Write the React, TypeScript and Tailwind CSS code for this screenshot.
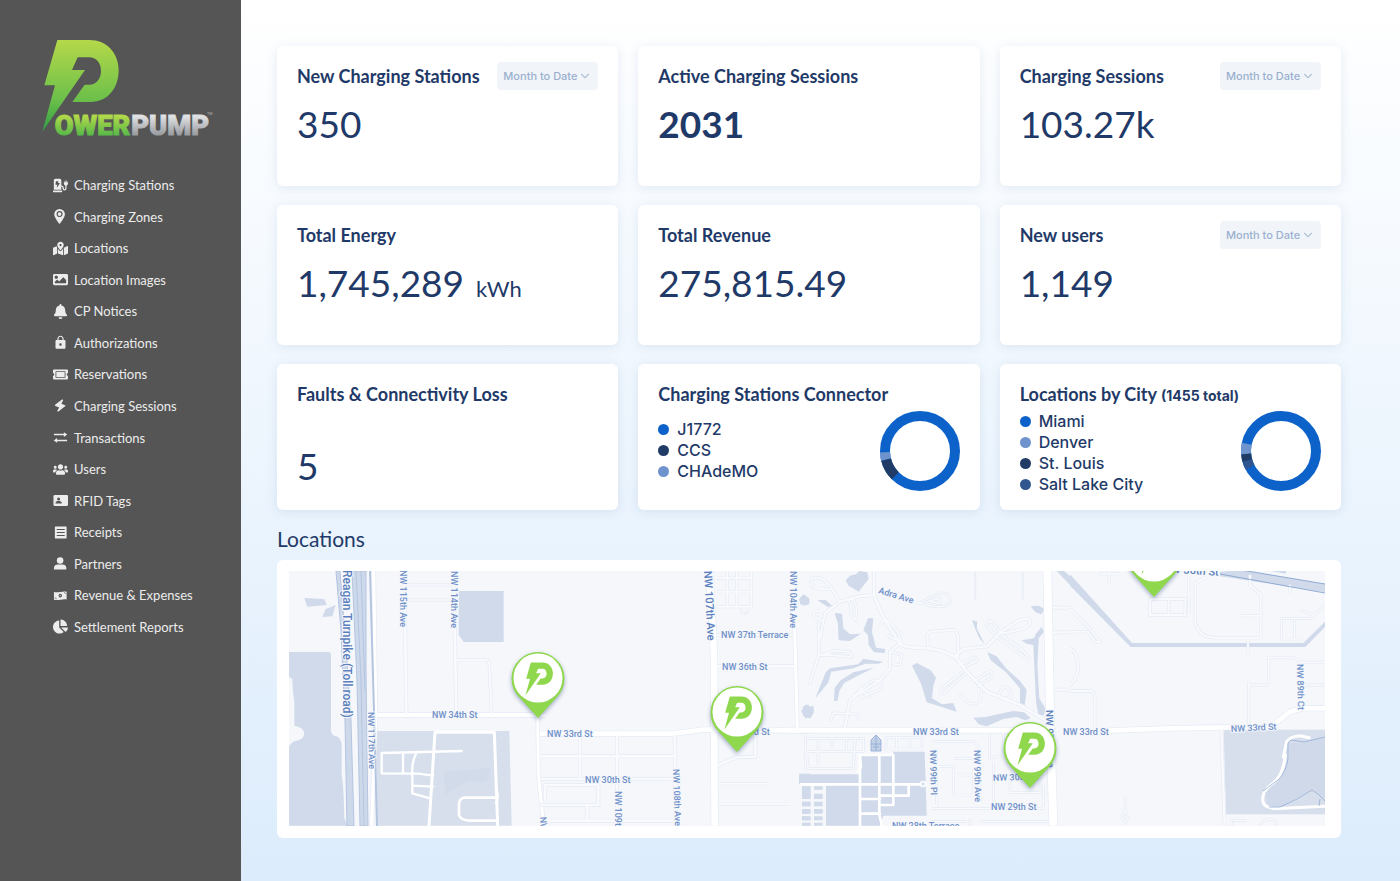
import React from "react";
import { ChevronDown } from "lucide-react";
import {
  FaBell,
  FaChargingStation,
  FaChartPie,
  FaImage,
  FaMapMarkedAlt,
  FaTicketAlt,
  FaUsers,
} from "react-icons/fa";
import { MdLock } from "react-icons/md";

const LOGO_PATH =
  "M82 45H178C231 45 266 85 266 136C266 190 233 231 182 231H127L164 179H178C200 179 213 160 213 138C213 113 199 97 177 97H143L126 135H165L37 320L75 181H43Z";

type IconProps = { className?: string };

const ZoneIcon = ({ className }: IconProps) => (
  <svg viewBox="0 0 16 16" className={className} fill="currentColor">
    <path d="M7 0a5.7 5.7 0 0 0-5.7 5.7C1.3 9.4 7 16 7 16s5.7-6.6 5.7-10.3A5.7 5.7 0 0 0 7 0Z" />
    <circle cx="7" cy="5.4" r="2.6" fill="none" stroke="#555" strokeWidth="1.2" />
  </svg>
);

const BoltIcon = ({ className }: IconProps) => (
  <svg viewBox="0 0 16 16" className={className} fill="currentColor">
    <path d="M9.6 1.6 2.2 7.2Q1.6 7.9 2.5 8.4L6.6 10 4.6 13.6Q4.6 14.8 5.8 14.4L13 8.9Q13.6 8.1 12.8 7.6L8.9 6.1 10.8 2.5Q10.8 1.2 9.6 1.6Z" />
  </svg>
);

const TransferIcon = ({ className }: IconProps) => (
  <svg viewBox="0 0 16 16" className={className} fill="currentColor">
    <path d="M1 4.1h10.6V2.4l3.6 2.5-3.6 2.5V5.7H1ZM15 10.3H4.4V8.6L.8 11.1l3.6 2.5v-1.7H15Z" />
  </svg>
);

const TagIcon = ({ className }: IconProps) => (
  <svg viewBox="0 0 16 16" className={className}>
    <rect x="0.5" y="2.2" width="15.5" height="11.6" rx="1.2" fill="currentColor" />
    <circle cx="6" cy="6.3" r="1.6" fill="#555" />
    <path d="M2.6 11.2c0-2 1.6-2.6 3.4-2.6s3.4.6 3.4 2.6Z" fill="#555" />
  </svg>
);

const ReceiptIcon = ({ className }: IconProps) => (
  <svg viewBox="0 0 16 16" className={className}>
    <rect x="2" y="1.5" width="12.5" height="13" rx="0.6" fill="currentColor" />
    <path d="M4 4.8h8.5M4 8h8.5M4 11.2h8.5" stroke="#555" strokeWidth="1.3" />
  </svg>
);

const PersonIcon = ({ className }: IconProps) => (
  <svg viewBox="0 0 16 16" className={className} fill="currentColor">
    <circle cx="7.6" cy="4.8" r="3.5" />
    <path d="M1 14.3V12.6C1 10.4 3 9.1 5.2 9.1H10C12.2 9.1 14.2 10.4 14.2 12.6V14.3Z" />
  </svg>
);

const MoneyIcon = ({ className }: IconProps) => (
  <svg viewBox="0 0 16 16" className={className}>
    <path d="M1 4.3c4.5 1.3 9-1.4 13.5-.4v8.3c-4.5-1-9 1.6-13.5.2Z" fill="currentColor" />
    <ellipse cx="7.8" cy="8.1" rx="1.8" ry="2.1" fill="#555" />
    <circle cx="7.8" cy="8.1" r="0.6" fill="currentColor" />
    <path d="M1.8 10.2a2 2 0 0 1 1.8 1.8M13.8 6a2 2 0 0 1-1.8-1.6" stroke="#555" strokeWidth="0.7" fill="none" />
  </svg>
);

const navItems = [
  { label: "Charging Stations", icon: FaChargingStation },
  { label: "Charging Zones", icon: ZoneIcon },
  { label: "Locations", icon: FaMapMarkedAlt },
  { label: "Location Images", icon: FaImage },
  { label: "CP Notices", icon: FaBell },
  { label: "Authorizations", icon: MdLock },
  { label: "Reservations", icon: FaTicketAlt },
  { label: "Charging Sessions", icon: BoltIcon },
  { label: "Transactions", icon: TransferIcon },
  { label: "Users", icon: FaUsers },
  { label: "RFID Tags", icon: TagIcon },
  { label: "Receipts", icon: ReceiptIcon },
  { label: "Partners", icon: PersonIcon },
  { label: "Revenue & Expenses", icon: MoneyIcon },
  { label: "Settlement Reports", icon: FaChartPie },
];

const stats = [
  { title: "New Charging Stations", value: "350", period: true },
  { title: "Active Charging Sessions", value: "2031", bold: true },
  { title: "Charging Sessions", value: "103.27k", period: true },
  { title: "Total Energy", value: "1,745,289", unit: "kWh" },
  { title: "Total Revenue", value: "275,815.49" },
  { title: "New users", value: "1,149", period: true },
];

// start and end are degrees, clockwise from the top of the ring
const connectors = [
  { label: "J1772", color: "#0d62c9" },
  { label: "CCS", color: "#1f3b66", start: 225, end: 256 },
  { label: "CHAdeMO", color: "#6f94cd", start: 256, end: 268 },
];

const cities = [
  { label: "Miami", color: "#0d62c9" },
  { label: "Denver", color: "#6f94cd", start: 265, end: 282 },
  { label: "St. Louis", color: "#1f3b66", start: 254, end: 265 },
  { label: "Salt Lake City", color: "#2f568f", start: 242, end: 254 },
];

const Logo = () => (
  <svg viewBox="0 0 600 375" className="w-[200px]" role="img" aria-label="PowerPump">
    <defs>
      <linearGradient id="bolt" x1="0" y1="0" x2="0" y2="1">
        <stop offset="0" stopColor="#b5d84a" />
        <stop offset="0.65" stopColor="#6cc04a" />
        <stop offset="1" stopColor="#2f9e44" />
      </linearGradient>
      <linearGradient id="green" x1="0" y1="0" x2="0" y2="1">
        <stop offset="0.2" stopColor="#b0d84a" />
        <stop offset="0.8" stopColor="#55b948" />
      </linearGradient>
      <linearGradient id="silver" x1="0" y1="0" x2="0" y2="1">
        <stop offset="0.2" stopColor="#e0e1e3" />
        <stop offset="0.8" stopColor="#97999d" />
      </linearGradient>
    </defs>
    <path d={LOGO_PATH} fill="url(#bolt)" />
    <g fontFamily="Roboto, sans-serif" fontWeight="900" fontSize="82" strokeWidth="3">
      <text x="74" y="330" fill="url(#green)" stroke="url(#green)">OWER</text>
      <text x="537" y="330" textAnchor="end" fill="url(#silver)" stroke="url(#silver)">PUMP</text>
    </g>
    <text x="531" y="271" fontFamily="Roboto, sans-serif" fontSize="11" fill="#b5b6b8">TM</text>
  </svg>
);

const PeriodSelect = ({ title }: { title: string }) => (
  <div className="relative shrink-0">
    <select
      aria-label={`${title} period`}
      className="h-7 w-[101px] appearance-none rounded-sm bg-[#f1f5f9] pl-[6px] font-['Inter',sans-serif] text-[11px] font-medium text-[#9bb0cf]"
    >
      <option>Month to Date</option>
    </select>
    <ChevronDown className="pointer-events-none absolute right-[6px] top-[7px] h-[14px] w-[14px] text-[#b3c1d6]" />
  </div>
);

const Card = ({ children }: { children: React.ReactNode }) => (
  <section className="rounded-md bg-white px-5 pt-4 shadow-[0_2px_12px_rgba(60,100,160,0.12)]">
    {children}
  </section>
);

const CardTitle = ({ children }: { children: React.ReactNode }) => (
  <h2 className="whitespace-nowrap text-[18px] font-bold">{children}</h2>
);

const Donut = ({ data }: { data: any[] }) => (
  <svg viewBox="0 0 80 80" className="h-20 w-20 shrink-0">
    <circle cx="40" cy="40" r="35" fill="none" stroke={data[0].color} strokeWidth="10" />
    {data.slice(1).map((d) => (
      <circle
        key={d.label}
        cx="40"
        cy="40"
        r="35"
        fill="none"
        stroke={d.color}
        strokeWidth="10"
        pathLength="360"
        strokeDasharray={`${d.end - d.start} 360`}
        transform={`rotate(${d.start - 90} 40 40)`}
      />
    ))}
  </svg>
);

const Legend = ({ data }: { data: any[] }) => (
  <ul className="font-['Inter',sans-serif] text-[16px] font-medium leading-[21px]">
    {data.map((d) => (
      <li key={d.label} className="flex items-center gap-2">
        <span className="h-[11px] w-[11px] rounded-full" style={{ background: d.color }} />
        {d.label}
      </li>
    ))}
  </ul>
);

type Road = [d: string, width: number];

// The map is cut in four tiles, each drawn at three times its size
const tiles: { x: number; areas: string[]; dark: string[]; roads: Road[]; lanes: Road[] }[] = [
  {
    x: -14,
    areas: [
      "M42 291H160Q168 291 168 300V530Q172 542 185 544Q198 550 200 570V660Q206 690 208 790L218 812H42V576Q50 558 70 556Q88 550 88 533Q84 516 58 512V440Q52 400 52 372L42 366Z",
      "M88 129L148 132L155 150L97 155Z",
      "M142 186L152 162L182 150L172 184Z",
      "M551 108H686V261H566L551 240Z",
    ],
    dark: ["M303 528H703L710 812H306Z"],
    roads: [
      ["M285 480H810", 12],
      ["M296 46L302 480L290 812", 10],
      ["M388 46L394 478", 8],
      ["M536 46L544 478", 8],
      ["M388 90H536M388 135H536", 5],
      ["M544 314H632Q643 316 643 330L650 478", 6],
      ["M788 480L790 660L805 800", 9],
      ["M795 540H810M795 605H810M795 672H810", 6],
    ],
    lanes: [
      ["M462 812L480 532H658L668 812", 9],
      ["M560 588L320 594V655L430 656L475 662M384 594V655M424 594Q410 620 412 655V715L465 730M412 692L475 695", 7],
      ["M662 728H565Q552 732 552 750V780Q556 796 585 797H662M622 797H662", 8],
      ["M662 700Q676 724 662 744", 6],
    ],
  },
  {
    x: 251,
    areas: ["M776 134L790 118L808 130V148L790 152Z", "M783 468L792 460L798 466L804 448L812 460V486L796 490Z", "M777 656H810V686H777Z", "M786 694H810V732H786ZM786 740H810V754H786ZM786 762H810V776H786ZM786 784H810V796H786ZM786 803H810V812H786Z"],
    dark: [],
    roads: [
      ["M0 536H400L490 524L520 524L810 527", 14],
      ["M508 46L522 300L524 812", 20],
      ["M764 220L772 524", 9],
      ["M530 240H764M530 334H764", 8],
      ["M120 540V668M231 540V812M404 540L408 812", 8],
      ["M0 604H404M0 672H400M0 797H400", 8],
      ["M15 740V690H175V750H0M142 750V797", 8],
      ["M646 530V606H592L530 632", 8],
      ["M530 686H686M530 748H750", 6],
      ["M530 70H634M530 110H634M530 155H634V46M562 46V155M590 46V155", 6],
      ["M600 160Q612 190 626 165", 3],
      ["M797 540V650", 4],
    ],
    lanes: [],
  },
  {
    x: 511,
    areas: [
      "M137 76L150 62L168 58L178 48L202 52L206 72L176 110L146 92Z",
      "M0 128L14 120L28 136L22 150L0 148Z",
      "M52 136L76 134L96 152L84 156Z",
      "M104 174L126 176L130 220L150 238L182 236L150 258L116 256L114 206Z",
      "M204 190H220L216 232L228 278L256 282L254 294L222 292L206 270L204 240L190 226Z",
      "M46 430L78 350L90 340L174 328L190 312L250 320L236 326L196 326L160 340L94 350L84 384Z",
      "M102 438L104 398L122 376L160 352L222 338L182 358L132 384L118 408L112 438Z",
      "M336 332L350 324L392 346L408 368L400 392L396 430L426 448L460 444L470 470L380 442L364 388Z",
      "M8 456L20 448L28 456L40 452L42 472L32 490L10 484Z",
      "M516 196L532 200L530 220L554 266L538 250L526 222Z",
      "M562 292L590 304L618 340L658 376L680 404L674 450L660 446V400L618 352L572 316Z",
      "M664 256L702 250L708 236L724 216L732 230L716 250L712 330L718 430L736 460L732 480L716 482L708 440L700 270L680 266Z",
      "M692 154L716 152L734 162L724 178L706 172Z",
      "M520 488L558 486L600 476L640 468L672 472L692 490L676 496L650 486L610 492L560 514L536 508Z",
      "M0 658H178V812H78V686H0Z",
      "M178 598H280V590H374L380 782H250L240 812H178Z",
      "M6 694H32V732H6ZM6 740H32V754H6ZM6 762H32V776H6ZM6 784H32V796H6ZM6 803H32V812H6ZM42 694H68V704H42ZM42 716H68V732H42ZM42 740H68V754H42ZM42 762H68V776H42ZM42 784H68V796H42ZM42 803H68V812H42Z",
      "M768 46H790L810 64V90Z",
    ],
    dark: [],
    roads: [
      ["M0 526H750", 15],
      ["M222 46V120Q244 180 262 206L300 266Q310 278 360 278Q430 280 470 310L500 350L560 410L660 450L744 500", 8],
      ["M222 120L176 124L120 140L76 174L70 200", 7],
      ["M120 140L90 92Q60 60 38 70Q26 90 48 100L92 104", 6],
      ["M300 266L270 290V340L240 376L150 434L134 520", 7],
      ["M70 200L44 184Q36 170 60 166M56 200V300L28 392M56 300H90L154 306L150 290L100 288Q80 294 66 300M70 200L60 250", 6],
      ["M244 210Q244 190 266 198L294 230L304 264M262 240L290 256", 6],
      ["M384 274L382 240L388 230L460 224Q480 236 474 262V306", 6],
      ["M462 306L490 282L560 274L604 230L650 200Q694 180 690 206Q680 224 604 236", 7],
      ["M604 236L570 196L560 212L590 246L690 318M604 240L660 278L690 310", 5],
      ["M480 330L520 306Q540 310 524 322L490 336M490 350L430 396Q412 416 430 416L500 352M520 380L570 348Q584 356 570 370L530 396", 5],
      ["M546 400L540 438Q520 456 500 440L476 416M604 430Q592 424 606 400Q618 386 632 412Q640 430 604 430", 5],
      ["M340 144H358L420 114Q450 112 452 136Q446 160 400 154L358 144M386 138L420 130V146Z", 4],
      ["M152 150Q138 126 162 136Q172 150 168 196Q152 190 152 150", 5],
      ["M160 424L200 390Q230 364 244 384Q250 404 220 412L180 430M180 400L210 430", 5],
      ["M134 476L100 474L90 502M134 476H170L178 496", 5],
      ["M270 290L306 300L300 330L276 326", 5],
      ["M742 46L750 480L760 812", 24],
      ["M750 158H810M750 232H810M764 404H810", 7],
      ["M16 550H190V590H20L24 640H160L166 550M54 550V630M96 550V590M140 550V590", 4],
      ["M258 548H366V582H258ZM290 548V582M330 548V582", 4],
      ["M396 560H520L540 580V740M396 760H730V690M410 580V750M460 610H530M460 660H520M420 634H460V720H520V640", 4],
      ["M568 530V610L610 600V530M580 620V740M630 660V712H720V600M540 800H750M510 790V812M396 800H500", 4],
      ["M526 50V134M668 50V134", 1],
    ],
    lanes: [
      ["M0 688H366M180 600V812M238 598V780L246 812M180 600H280V750H240M180 732H240M180 776H240M326 690V722H240", 8],
      ["M180 600L184 636L174 650", 6],
    ],
  },
  {
    x: 781,
    areas: ["M0 58L186 264H700L765 200V216L706 276H182L0 92Z", "M450 50L520 46L765 86V112L520 74L450 64Z", "M590 46H648V56Z"],
    dark: ["M461 524H765V778H468Z"],
    roads: [
      ["M110 527L300 520L470 517H600L660 470L700 460H765", 14],
      ["M454 524L464 812", 7],
      ["M0 162L60 222L90 260L76 262L54 230H0", 6],
      ["M0 280Q22 290 24 330Q26 370 0 390M0 408H64Q76 410 74 430V520", 6],
      ["M85 56H150M118 46V84", 6],
      ["M240 132H346V180H240ZM296 132V180M356 50V176", 6],
      ["M410 66L376 84V206Q390 246 430 248H572V118L540 92V60M512 182H572", 6],
      ["M534 250V300M536 380V510M536 390H596V308H672L690 322H765M690 390H765", 5],
      ["M634 190H720L765 150M634 190V252H696M674 190V252M690 164L730 178", 4],
      ["M660 90V116", 6],
      ["M165 724V770L156 786L165 804L174 786L165 770", 4],
      ["M484 812V796H530M570 812Q590 780 618 800V812", 4],
    ],
    lanes: [
      ["M640 606L650 560Q660 544 690 542L718 548M646 600Q640 660 610 684Q570 712 580 744Q590 764 640 760L765 754", 9],
    ],
  },
];

const labels = [
  { text: "Reagan Turnpike (Toll road)", x: 54, y: -1, rotate: 90, size: 12 },
  { text: "NW 115th Ave", x: 111, y: -1, rotate: 90 },
  { text: "NW 114th Ave", x: 162, y: 0, rotate: 90 },
  { text: "NW 117th Ave", x: 79, y: 141, rotate: 89 },
  { text: "NW 34th St", x: 143, y: 147 },
  { text: "NW 33rd St", x: 258, y: 166 },
  { text: "NW 30th St", x: 296, y: 212 },
  { text: "NW 109th Ave", x: 326, y: 220, rotate: 90 },
  { text: "NW 108th Ave", x: 384, y: 198, rotate: 88 },
  { text: "NW 112th Ave", x: 251, y: 246, rotate: 86 },
  { text: "NW 107th Ave", x: 415, y: 0, rotate: 87, size: 11 },
  { text: "NW 104th Ave", x: 501, y: 0, rotate: 90 },
  { text: "NW 37th Terrace", x: 432, y: 67 },
  { text: "NW 36th St", x: 433, y: 99 },
  { text: "NW 33rd St", x: 435, y: 164 },
  { text: "Adra Ave", x: 589, y: 22, rotate: 17 },
  { text: "NW 33rd St", x: 624, y: 164 },
  { text: "NW 99th Pl", x: 641, y: 179, rotate: 89 },
  { text: "NW 99th Ave", x: 685, y: 179, rotate: 89 },
  { text: "NW 30th St", x: 704, y: 210, rotate: -2 },
  { text: "NW 29th St", x: 702, y: 239 },
  { text: "NW 28th Terrace", x: 603, y: 258 },
  { text: "NW 97th Ave", x: 757, y: 139, rotate: 89, size: 10 },
  { text: "NW 33rd St", x: 774, y: 164 },
  { text: "NW 33rd St", x: 942, y: 161, rotate: -3 },
  { text: "NW 89th Ct", x: 1008, y: 93, rotate: 89 },
  { text: "NW 36th St", x: 874, y: 1, rotate: 4, size: 11 },
];

const pins = [
  { x: 249, y: 108 },
  { x: 448, y: 142 },
  { x: 741, y: 178 },
  { x: 865, y: -13 },
];

const CityMap = () => (
  <svg viewBox="0 0 1036 255" className="block h-auto w-full overflow-hidden" role="img" aria-label="Map of charging locations">
    <rect width="1036" height="255" fill="#f5f7fb" />
    {tiles.map((tile) => (
      <svg key={tile.x} x={tile.x} y="-16" width="270" height="290" viewBox="0 0 810 870">
        {tile.dark.map((d) => (
          <path key={d} d={d} fill="#d7dfec" />
        ))}
        {tile.areas.map((d) => (
          <path key={d} d={d} fill="#d0daea" />
        ))}
        <g fill="none" strokeLinejoin="round">
          {tile.roads.map(([d, w]) => (
            <path key={d} d={d} stroke="#e5eaf4" strokeWidth={w + 4} />
          ))}
          {tile.roads.map(([d, w]) => (
            <path key={d} d={d} stroke={w < 9 ? "#f9fafd" : "#fff"} strokeWidth={w} />
          ))}
          {tile.lanes.map(([d, w]) => (
            <path key={d} d={d} stroke="#fff" strokeWidth={w} strokeLinecap="round" />
          ))}
        </g>
      </svg>
    ))}
    {/* Turnpike */}
    <path d="M47 0H51L58 90L62 150L65 255H58L56 150L52 60Z" fill="#cdd9eb" stroke="#b4c5e0" />
    <path d="M63 0H77V100L79 255H71L68 110Z" fill="#cdd9eb" stroke="#b4c5e0" />
    <g fill="none" stroke="#b4c5e0">
      <path d="M67 0L72 110L75 255M72 0L76 120" />
      <path d="M81 0L85 140L88 255" strokeWidth="2" />
    </g>
    {/* Expressway and lake */}
    <g fill="none" stroke="#91abd4">
      <path d="M931 3L1036 22M931 -3L958 0L1036 13" />
      <path d="M1036 166L1015 171L1002 169L999 172V188Q997 202 989 209L974 220M980 236H991L1008 228L1023 219L1029 223L1036 230M1031 228L1030 235" strokeWidth="0.8" />
    </g>
    <path d="M1000 172L1015 172L1036 167V229L1024 218L1008 228L991 235H979L976 222L990 210L999 194Z" fill="#c8d4e8" opacity="0.5" />
    <path d="M154 201L201 197V207L192 212L180 209L157 224Z" fill="#cdd8e9" opacity="0.6" />
    {/* School building */}
    <path
      d="M582 171V169L587 164L592 169V180H582ZM587 164V180M582 173H592M584 176H590"
      fill="#c3d1e8"
      stroke="#8fa9d3"
      strokeWidth="0.8"
    />
    <circle cx="634" cy="213" r="2.5" fill="#d7dfec" stroke="#fff" strokeWidth="1.5" />
    <g
      fontFamily="Roboto, sans-serif"
      fontWeight="500"
      fill="#6f90c8"
      stroke="#f5f7fb"
      strokeWidth="2"
      paintOrder="stroke"
    >
      {labels.map((l, i) => (
        <text
          key={i}
          fontSize={l.size ?? 9}
          fill={l.size ? "#5b7fbd" : undefined}
          transform={`translate(${l.x} ${l.y}) rotate(${l.rotate ?? 0})`}
        >
          {l.text}
        </text>
      ))}
    </g>
    {pins.map((pin) => (
      <g
        key={pin.x}
        transform={`translate(${pin.x} ${pin.y})`}
        className="drop-shadow-[0_2px_2px_rgba(60,80,130,0.45)]"
      >
        <path d="M0 39L-19 18A26.5 26.5 0 1 1 19 18Z" fill="#8fd84e" />
        <circle cy="-1" r="24.5" fill="#fff" />
        <path d={LOGO_PATH} fill="#8fd84e" transform="translate(-17 -22) scale(0.12)" />
      </g>
    ))}
  </svg>
);

export default function App() {
  return (
    <div className="flex min-h-screen font-['Lato',sans-serif] text-[#1f3a68]">
      <aside className="w-[241px] shrink-0 bg-[#555555] pt-[25px]">
        <div className="pl-[30px]">
          <Logo />
        </div>
        <nav className="mt-[25px] pl-[53px]">
          <ul className="flex min-h-[462px] flex-col justify-between">
            {navItems.map((item) => (
              <li key={item.label}>
                <a
                  href="#"
                  className="flex items-center gap-[6px] whitespace-nowrap text-[13px] leading-5 text-[#ececec]"
                >
                  <item.icon className="h-[15px] w-[15px] shrink-0" />
                  {item.label}
                </a>
              </li>
            ))}
          </ul>
        </nav>
      </aside>

      <main className="min-w-0 flex-1 bg-gradient-to-b from-white to-[#dcecfc] pb-10 pl-9 pr-[59px] pt-[46px]">
        <div className="grid grid-cols-3 grid-rows-[minmax(140px,auto)_minmax(140px,auto)_minmax(146px,auto)] gap-x-5 gap-y-[19px]">
          {stats.map((stat) => (
            <Card key={stat.title}>
              <div className="flex h-7 items-center justify-between">
                <CardTitle>{stat.title}</CardTitle>
                {stat.period && <PeriodSelect title={stat.title} />}
              </div>
              <p
                className={`mt-[14px] text-[37px] leading-10 ${stat.bold ? "font-bold" : ""}`}
              >
                {stat.value}
                {stat.unit && <span className="ml-3 text-[22px]">{stat.unit}</span>}
              </p>
            </Card>
          ))}

          <Card>
            <div className="flex h-7 items-center">
              <CardTitle>Faults &amp; Connectivity Loss</CardTitle>
            </div>
            <p className="mt-[38px] text-[37px] leading-10">5</p>
          </Card>

          <Card>
            <div className="flex h-7 items-center">
              <CardTitle>Charging Stations Connector</CardTitle>
            </div>
            <div className="mt-[3px] flex justify-between">
              <div className="pt-2">
                <Legend data={connectors} />
              </div>
              <Donut data={connectors} />
            </div>
          </Card>

          <Card>
            <div className="flex h-7 items-center">
              <CardTitle>
                Locations by City{" "}
                <span className="font-['Inter',sans-serif] text-[14px] font-bold">(1455 total)</span>
              </CardTitle>
            </div>
            <div className="mt-[3px] flex justify-between">
              <Legend data={cities} />
              <Donut data={cities} />
            </div>
          </Card>
        </div>

        <h2 className="mt-4 text-[21px] leading-[26px]">Locations</h2>
        <section className="mt-2 rounded-md bg-white pb-3 pl-3 pr-4 pt-[11px]">
          <CityMap />
        </section>
      </main>
    </div>
  );
}
